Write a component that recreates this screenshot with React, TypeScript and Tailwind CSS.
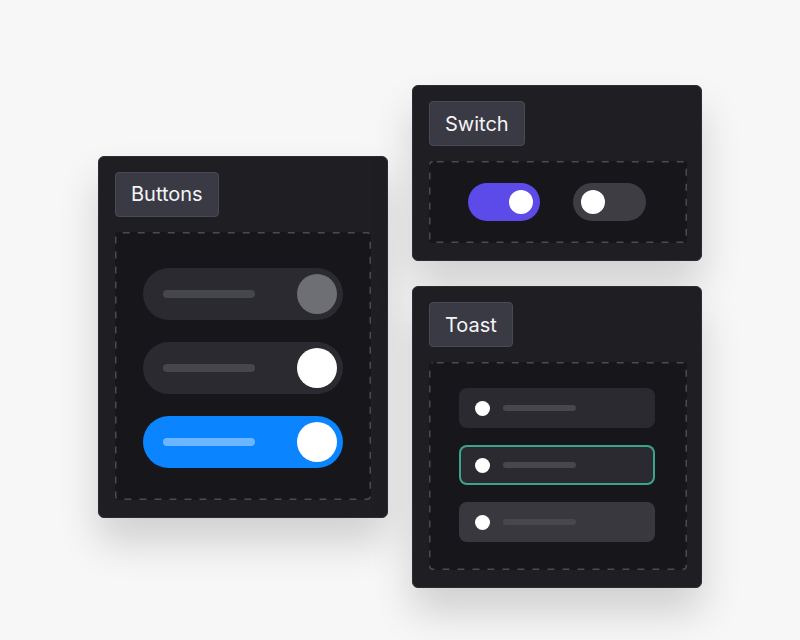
import React from "react";

function Dashed({ w, h, children }: { w: number; h: number; children: React.ReactNode }) {
  return (
    <div className="relative mt-[15px] rounded-[3px] bg-[#17161b]" style={{ width: w, height: h }}>
      <svg className="pointer-events-none absolute inset-0" width={w} height={h}>
        <rect
          x="0.75"
          y="0.75"
          width={w - 1.5}
          height={h - 1.5}
          rx="3"
          fill="none"
          stroke="#4a4a53"
          strokeWidth="1.5"
          strokeDasharray="7 8"
          strokeDashoffset="-4"
        />
      </svg>
      {children}
    </div>
  );
}

function Card({ title, children }: { title: string; children: React.ReactNode }) {
  return (
    <div className="w-[290px] rounded-md border border-[#2c2c33] bg-[#1e1e23] px-4 pb-[17px] pt-[15px] shadow-[0_24px_40px_rgba(0,0,0,0.16)]">
      <div className="inline-flex h-[45px] items-center rounded border border-[#4a4a55] bg-[#3a3a45] px-[15px] text-[20px] text-[#f4f4f7]">
        {title}
      </div>
      {children}
    </div>
  );
}

function Pill({ track, bar, knob }: { track: string; bar: string; knob: string }) {
  return (
    <div className={`flex h-[52px] w-[200px] items-center justify-between rounded-full pl-5 pr-[6px] ${track}`}>
      <div className={`h-[8px] w-[92px] rounded-full ${bar}`} />
      <div className={`h-[40px] w-[40px] rounded-full ${knob}`} />
    </div>
  );
}

function Toast({ cls }: { cls: string }) {
  return (
    <div className={`flex h-[40px] w-[196px] items-center gap-[13px] rounded-lg pl-4 ${cls}`}>
      <div className="h-[15px] w-[15px] rounded-full bg-white" />
      <div className="h-[6px] w-[73px] rounded-full bg-[#47474e]" />
    </div>
  );
}

export default function App() {
  return (
    <div
      className="flex h-[640px] w-full items-center justify-center gap-[24px] bg-[#f7f7f8] pt-[33px]"
      style={{ fontFamily: "Inter, 'Noto Sans', sans-serif" }}
    >
      <Card title="Buttons">
        <Dashed w={256} h={268}>
          <div className="flex flex-col items-center gap-[22px] pt-[36px]">
            <Pill track="bg-[#2a2a30]" bar="bg-[#46464d]" knob="bg-[#6e6f75]" />
            <Pill track="bg-[#2a2a30]" bar="bg-[#46464d]" knob="bg-white" />
            <Pill track="bg-[#0a84ff]" bar="bg-[#6cb5ff]" knob="bg-white" />
          </div>
        </Dashed>
      </Card>

      <div className="flex flex-col gap-[25px]">
        <Card title="Switch">
          <Dashed w={258} h={82}>
            <div className="flex h-full items-center justify-center gap-[33px] pr-[2px]">
              <div className="flex h-[38px] w-[72px] items-center justify-end rounded-full bg-[#5c4be8] pr-[7px]">
                <div className="h-[24px] w-[24px] rounded-full bg-white" />
              </div>
              <div className="flex h-[38px] w-[73px] items-center rounded-full bg-[#3d3d43] pl-[8px]">
                <div className="h-[24px] w-[24px] rounded-full bg-white" />
              </div>
            </div>
          </Dashed>
        </Card>

        <Card title="Toast">
          <Dashed w={258} h={208}>
            <div className="flex flex-col items-center gap-[17px] pr-[2px] pt-[26px]">
              <Toast cls="bg-[#2a2a30]" />
              <Toast cls="bg-[#2a2a30] ring-2 ring-inset ring-[#3aa58a]" />
              <Toast cls="bg-[#38383e]" />
            </div>
          </Dashed>
        </Card>
      </div>
    </div>
  );
}
